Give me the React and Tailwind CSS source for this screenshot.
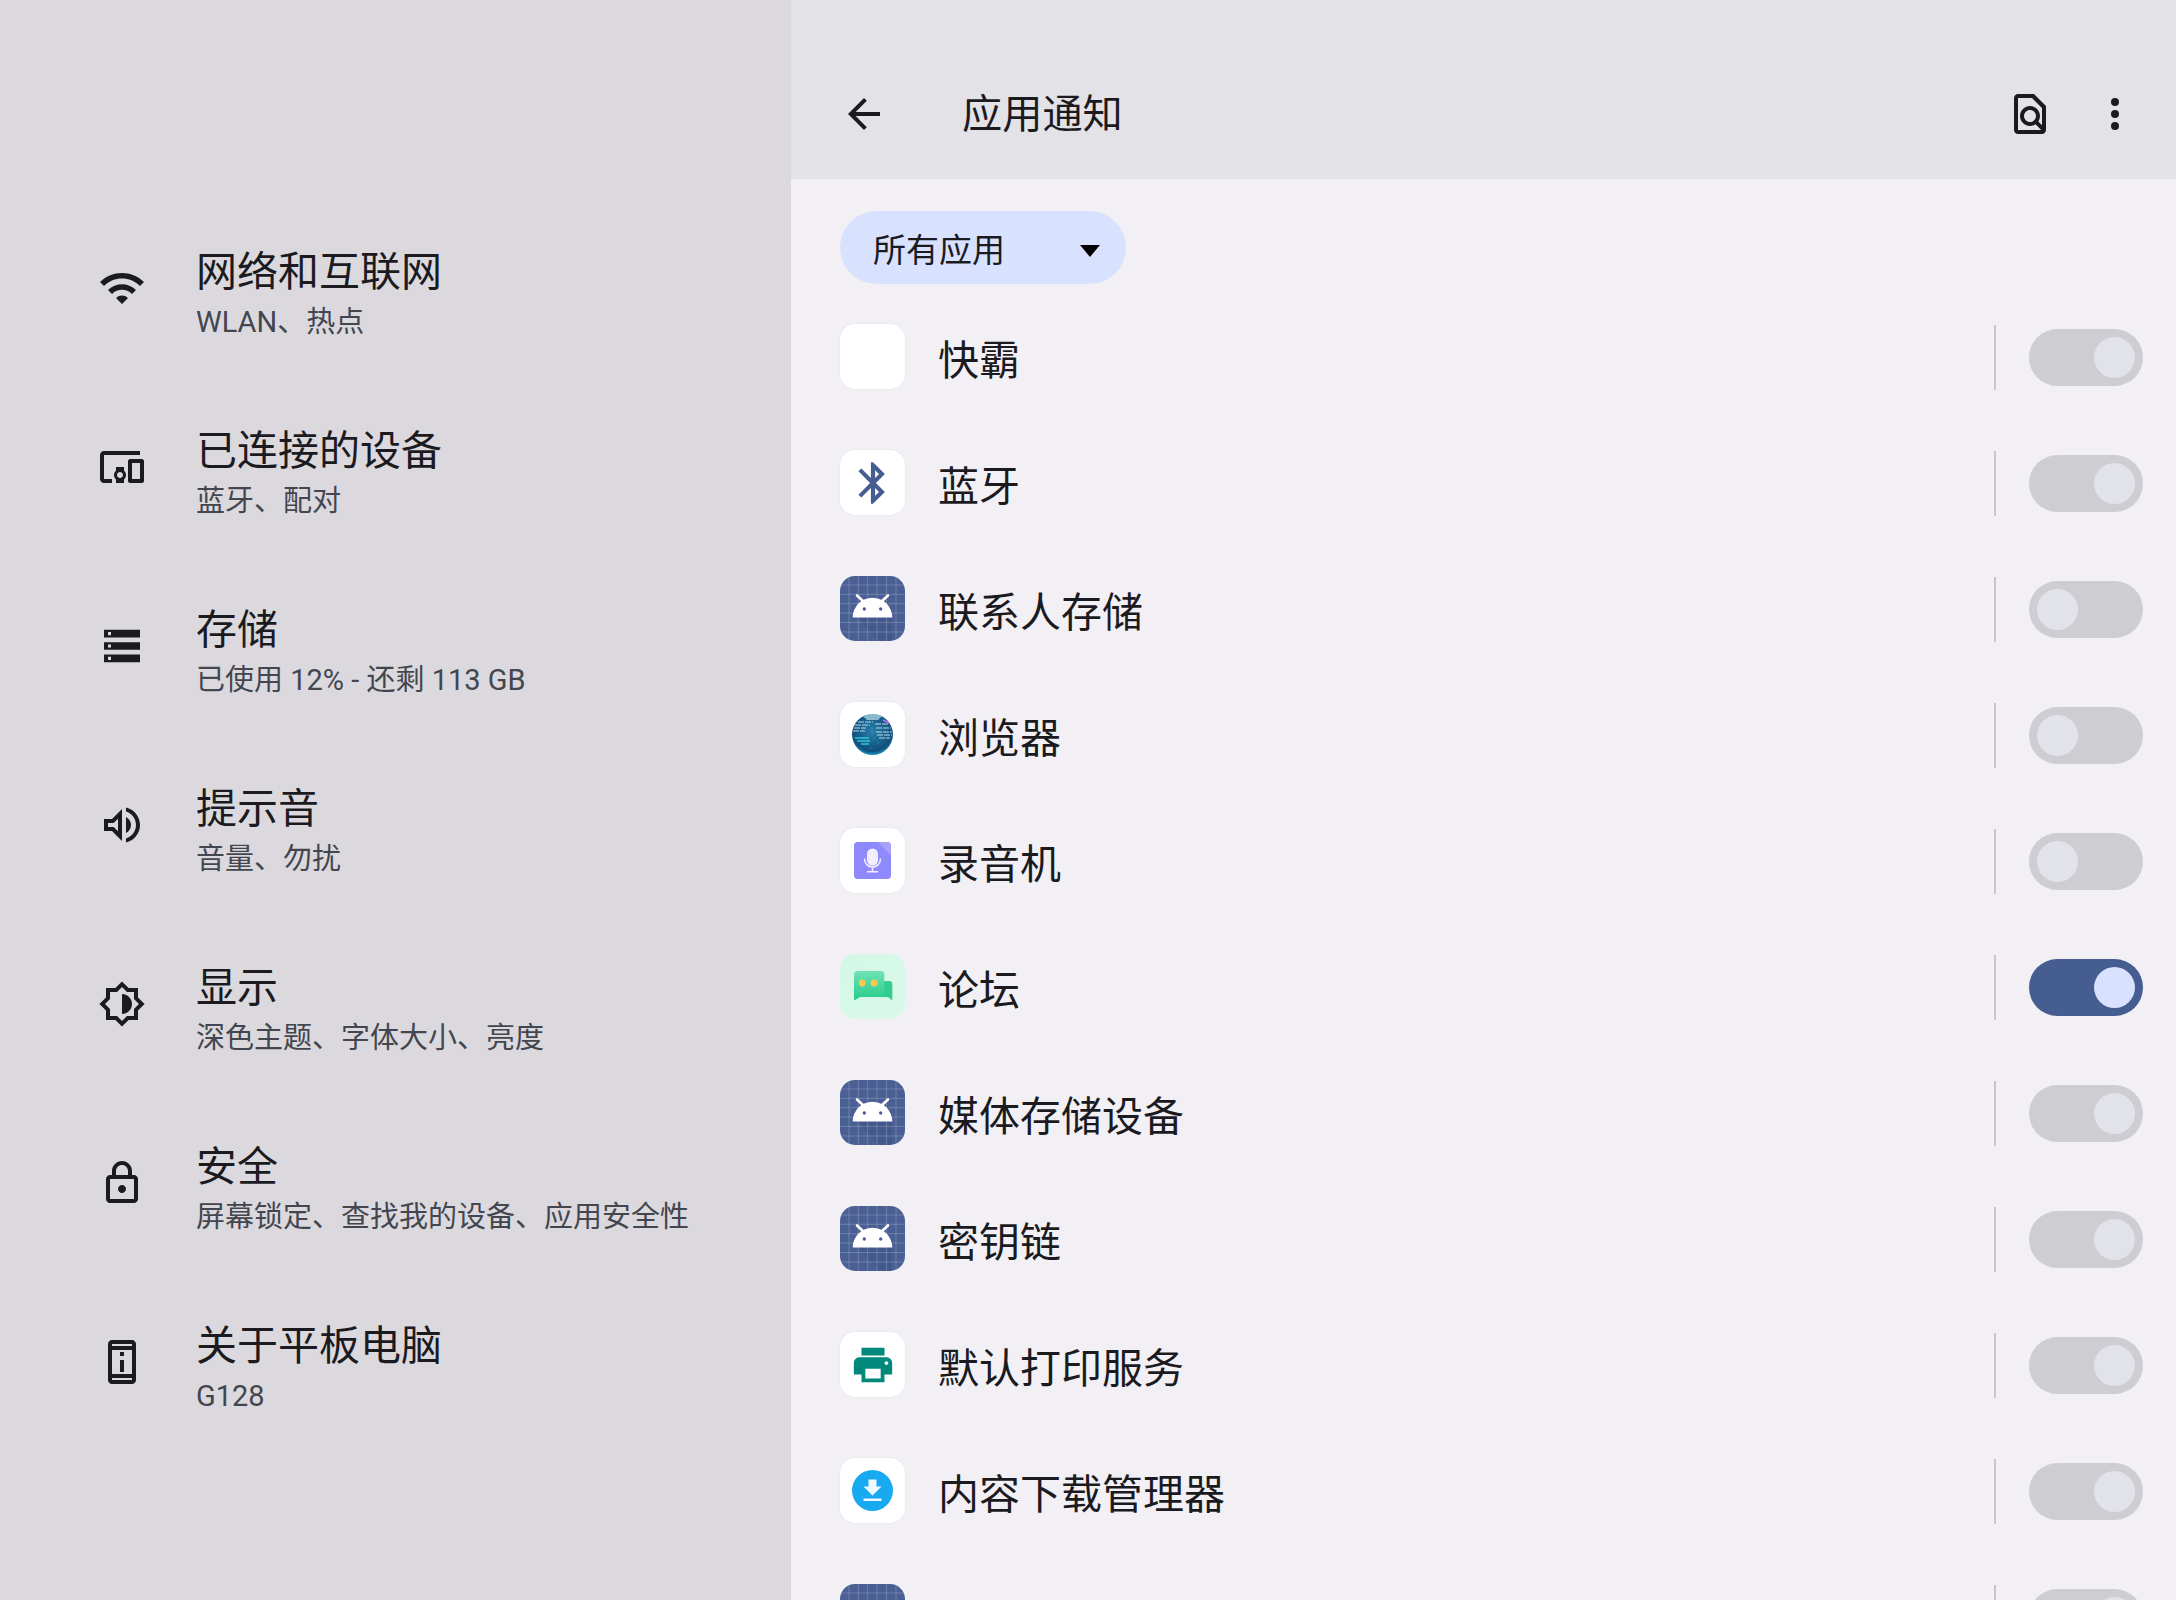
import React from 'react';

const settingsItems = [
  {
    title: '网络和互联网',
    sub: 'WLAN、热点',
    d: 'M1 9l2 2c4.97-4.97 13.03-4.97 18 0l2-2C16.93 2.93 7.08 2.93 1 9zm8 8l3 3 3-3c-1.65-1.66-4.34-1.66-6 0zm-4-4l2 2c2.76-2.76 7.24-2.76 10 0l2-2C15.14 9.14 8.87 9.14 5 13z',
  },
  {
    title: '已连接的设备',
    sub: '蓝牙、配对',
    d: 'M3,6h18V4H3C1.9,4,1,4.9,1,6v12c0,1.1,0.9,2,2,2h4v-2H3V6z M13,12H9v1.78C8.39,14.33,8,15.11,8,16c0,0.89,0.39,1.67,1,2.22V20h4v-1.78c0.61-0.55,1-1.34,1-2.22s-0.39-1.67-1-2.22V12z M11,17.5c-0.83,0-1.5-0.67-1.5-1.5s0.67-1.5,1.5-1.5s1.5,0.67,1.5,1.5S11.83,17.5,11,17.5z M22,8h-6c-0.5,0-1,0.5-1,1v10c0,0.5,0.5,1,1,1h6c0.5,0,1-0.5,1-1V9C23,8.5,22.5,8,22,8z M21,18h-4v-8h4V18z',
  },
  {
    title: '存储',
    sub: '已使用 12% - 还剩 113 GB',
    d: 'M3 3.9h18v3.8H3zM5 5v1.6h1.5V5zM3 10.1h18v3.8H3zM5 11.2v1.6h1.5v-1.6zM3 16.3h18v3.8H3zM5 17.4V19h1.5v-1.6z',
    evenodd: true,
  },
  {
    title: '提示音',
    sub: '音量、勿扰',
    d: 'M3 9v6h4l5 5V4L7 9H3zm7-.17v6.34L7.83 13H5v-2h2.83L10 8.83zM16.5 12c0-1.77-1.02-3.29-2.5-4.03v8.05c1.48-.73 2.5-2.25 2.5-4.02zM14 3.23v2.06c2.89.86 5 3.54 5 6.71s-2.11 5.85-5 6.71v2.06c4.01-.91 7-4.49 7-8.77 0-4.28-2.99-7.86-7-8.77z',
  },
  {
    title: '显示',
    sub: '深色主题、字体大小、亮度',
    d: 'M20 15.31L23.31 12 20 8.69V4h-4.69L12 .69 8.69 4H4v4.69L.69 12 4 15.31V20h4.69L12 23.31 15.31 20H20v-4.69zM18 14.48V18h-3.52L12 20.48 9.52 18H6v-3.52L3.52 12 6 9.52V6h3.52L12 3.52 14.48 6H18v3.52L20.48 12 18 14.48zM12 7v10c2.76 0 5-2.24 5-5s-2.24-5-5-5z',
  },
  {
    title: '安全',
    sub: '屏幕锁定、查找我的设备、应用安全性',
    d: 'M18 8h-1V6c0-2.76-2.24-5-5-5S7 3.24 7 6v2H6c-1.1 0-2 .9-2 2v10c0 1.1.9 2 2 2h12c1.1 0 2-.9 2-2V10c0-1.1-.9-2-2-2zM9 6c0-1.66 1.34-3 3-3s3 1.34 3 3v2H9V6zm9 14H6V10h12v10zm-6-3c1.1 0 2-.9 2-2s-.9-2-2-2-2 .9-2 2 .9 2 2 2z',
  },
  {
    title: '关于平板电脑',
    sub: 'G128',
    d: 'M17 1H7c-1.1 0-2 .9-2 2v18c0 1.1.9 2 2 2h10c1.1 0 2-.9 2-2V3c0-1.1-.9-2-2-2zm0 20H7v-1h10v1zm0-3H7V6h10v12zm0-14H7V3h10v1zM11 7h2v2h-2zM11 11h2v6h-2z',
  },
];

const SvgIcon = ({ d, evenodd, className = '' }) => (
  <svg viewBox="0 0 24 24" className={className} fill="currentColor">
    <path d={d} fillRule={evenodd ? 'evenodd' : 'nonzero'} clipRule={evenodd ? 'evenodd' : 'nonzero'} />
  </svg>
);

const AndroidTile = () => (
  <svg viewBox="0 0 65 65" className="h-[65px] w-[65px] rounded-[15px]">
    <rect width="65" height="65" fill="#4a5f94" />
    <path d="M17 42 L52 42 L52 65 L40 65 Z" fill="#3f5386" opacity="0.6" />
    <g stroke="#ffffff" strokeOpacity="0.2" strokeWidth="1">
      {[9, 18.3, 27.7, 37, 46.5, 56].map((p) => (
        <React.Fragment key={p}>
          <line x1={p} y1="0" x2={p} y2="65" />
          <line x1="0" y1={p} x2="65" y2={p} />
        </React.Fragment>
      ))}
    </g>
    <path d="M12.7 41.5a19.8 19.8 0 0 1 39.6 0z" fill="#ffffff" />
    <path d="M17 19.5 L23.5 25.5 M48 19.5 L41.5 25.5" stroke="#ffffff" strokeWidth="2.6" strokeLinecap="round" />
    <circle cx="24.3" cy="33" r="1.7" fill="#4a5f94" />
    <circle cx="40.7" cy="33" r="1.7" fill="#4a5f94" />
  </svg>
);

const BluetoothTile = () => (
  <div className="flex h-[65px] w-[65px] items-center justify-center rounded-[15px] bg-white shadow-[0_0_2px_rgba(0,0,0,0.08)]">
    <SvgIcon
      className="h-[50px] w-[50px] text-[#465d91]"
      d="M17.71 7.71L12 2h-1v7.59L6.41 5 5 6.41 10.59 12 5 17.59 6.41 19 11 14.41V22h1l5.71-5.71-4.3-4.29 4.3-4.29zM13 5.83l1.88 1.88L13 9.59V5.83zm1.88 10.46L13 18.17v-3.76l1.88 1.88z"
    />
  </div>
);

const GlobeTile = () => (
  <div className="flex h-[65px] w-[65px] items-center justify-center rounded-[15px] bg-white shadow-[0_0_2px_rgba(0,0,0,0.08)]">
    <svg viewBox="0 0 41 41" className="h-[41px] w-[41px]">
      <defs>
        <radialGradient id="globe" cx="50%" cy="42%" r="60%">
          <stop offset="0%" stopColor="#2a7fa8" />
          <stop offset="55%" stopColor="#175f8c" />
          <stop offset="82%" stopColor="#124f7c" />
          <stop offset="100%" stopColor="#1fa6d0" />
        </radialGradient>
      </defs>
      <circle cx="20.5" cy="20.5" r="20.5" fill="url(#globe)" />
      <path d="M11 2.3a20.5 20.5 0 0 1 19 0 L26 6 H15z" fill="#a8cfe0" opacity="0.8" />
      <g stroke="#d3eef6" strokeWidth="1" strokeDasharray="6 1" opacity="0.85">
        <line x1="6" y1="8" x2="21" y2="8" />
        <line x1="3" y1="11" x2="18" y2="11" />
        <line x1="2" y1="14" x2="14" y2="14" />
        <line x1="1" y1="17" x2="13" y2="17" />
        <line x1="23" y1="10" x2="36" y2="10" />
        <line x1="24" y1="14" x2="39" y2="14" />
        <line x1="24" y1="18" x2="40" y2="18" />
        <line x1="25" y1="21" x2="40" y2="21" />
        <line x1="27" y1="24" x2="38" y2="24" />
      </g>
      <g stroke="#35e0e4" strokeWidth="1.2">
        <line x1="3" y1="24" x2="17" y2="24" />
        <line x1="5" y1="27" x2="18" y2="27" />
        <line x1="9" y1="30" x2="17" y2="30" />
      </g>
      <line x1="31" y1="6" x2="37" y2="9" stroke="#c86bf0" strokeWidth="1.4" />
      <g fill="#5cc0da" opacity="0.8">
        <circle cx="20" cy="14" r="0.6" />
        <circle cx="20" cy="18" r="0.6" />
        <circle cx="22" cy="24" r="0.6" />
        <circle cx="26" cy="29" r="0.6" />
        <circle cx="19" cy="34" r="0.6" />
      </g>
    </svg>
  </div>
);

const RecorderTile = () => (
  <div className="flex h-[65px] w-[65px] items-center justify-center rounded-[15px] bg-white shadow-[0_0_2px_rgba(0,0,0,0.08)]">
    <svg viewBox="0 0 37 37" className="h-[37px] w-[37px] rounded-[4px]">
      <rect width="37" height="37" fill="#7d78ff" />
      <path d="M0 0H24L37 14V0z" fill="#a7a1fb" />
      <path d="M0 0H24L37 14V37H0z" fill="#a49dfb" opacity="0.45" />
      <rect x="13" y="6.5" width="11" height="17" rx="5.5" fill="#f1effe" />
      <path d="M10.5 16.5c0 5 3.5 8.5 8 8.5s8-3.5 8-8.5" fill="none" stroke="#f1effe" strokeWidth="1.6" />
      <path d="M18.5 25v4.5M13 29.8h11" stroke="#f1effe" strokeWidth="1.6" />
    </svg>
  </div>
);

const ForumTile = () => (
  <svg viewBox="0 0 65 65" className="h-[65px] w-[65px] rounded-[15px]">
    <defs>
      <linearGradient id="forumBg" x1="0" y1="0" x2="1" y2="1">
        <stop offset="0%" stopColor="#d3f7e6" />
        <stop offset="100%" stopColor="#d9f9ea" />
      </linearGradient>
      <linearGradient id="bubble" x1="0" y1="0" x2="0" y2="1">
        <stop offset="0%" stopColor="#6ee3b5" />
        <stop offset="100%" stopColor="#26cb8a" />
      </linearGradient>
      <filter id="soft">
        <feGaussianBlur stdDeviation="0.6" />
      </filter>
    </defs>
    <rect width="65" height="65" fill="url(#forumBg)" />
    <g filter="url(#soft)">
      <path d="M34 27H49a3.3 3.3 0 0 1 3.3 3.3V46.5L48 43H34z" fill="#35cc92" />
      <path d="M16.5 17H41a3.3 3.3 0 0 1 3.3 3.3V43H20L14 46.5V20.3A3.3 3.3 0 0 1 16.5 17z" fill="url(#bubble)" />
    </g>
    <circle cx="22.3" cy="29" r="3.4" fill="#ffc94d" />
    <circle cx="34" cy="29" r="3.4" fill="#ffc94d" />
  </svg>
);

const PrintTile = () => (
  <div className="flex h-[65px] w-[65px] items-center justify-center rounded-[15px] bg-white shadow-[0_0_2px_rgba(0,0,0,0.08)]">
    <SvgIcon
      className="h-[46px] w-[46px] text-[#00897b]"
      d="M19 8H5c-1.66 0-3 1.34-3 3v6h4v4h12v-4h4v-6c0-1.66-1.34-3-3-3zm-3 11H8v-5h8v5zm3-7c-.55 0-1-.45-1-1s.45-1 1-1 1 .45 1 1-.45 1-1 1zm-1-9H6v4h12V3z"
    />
  </div>
);

const DownloadTile = () => (
  <div className="flex h-[65px] w-[65px] items-center justify-center rounded-[15px] bg-white shadow-[0_0_2px_rgba(0,0,0,0.08)]">
    <svg viewBox="0 0 41 41" className="h-[41px] w-[41px]">
      <circle cx="20.5" cy="20.5" r="20.5" fill="#18aaf0" />
      <path d="M16.5 9.5h8v7h5l-9 9-9-9h5z" fill="#eef8fe" />
      <rect x="11.5" y="28.5" width="18" height="2.5" fill="#eef8fe" />
    </svg>
  </div>
);

const EmptyTile = () => (
  <div className="h-[65px] w-[65px] rounded-[15px] bg-white shadow-[0_0_2px_rgba(0,0,0,0.08)]" />
);

const apps = [
  { name: '快霸', tile: <EmptyTile />, on: true, disabled: true },
  { name: '蓝牙', tile: <BluetoothTile />, on: true, disabled: true },
  { name: '联系人存储', tile: <AndroidTile />, on: false, disabled: true },
  { name: '浏览器', tile: <GlobeTile />, on: false, disabled: true },
  { name: '录音机', tile: <RecorderTile />, on: false, disabled: true },
  { name: '论坛', tile: <ForumTile />, on: true, disabled: false },
  { name: '媒体存储设备', tile: <AndroidTile />, on: true, disabled: true },
  { name: '密钥链', tile: <AndroidTile />, on: true, disabled: true },
  { name: '默认打印服务', tile: <PrintTile />, on: true, disabled: true },
  { name: '内容下载管理器', tile: <DownloadTile />, on: true, disabled: true },
  { name: '', tile: <AndroidTile />, on: true, disabled: true },
];

const Toggle = ({ on, disabled }) => (
  <div
    className={`flex h-[57px] w-[114px] items-center rounded-full px-[8px] ${on ? 'justify-end' : 'justify-start'} ${
      disabled ? 'bg-[#cecdd2]' : 'bg-[#465d91]'
    }`}
  >
    <div className={`h-[41px] w-[41px] rounded-full ${disabled ? 'bg-[#e2e2ea]' : 'bg-[#d8e2ff]'}`} />
  </div>
);

const App = () => {
  return (
    <div className="flex h-[1600px] w-[2176px] overflow-hidden font-[Roboto,'Noto_Sans_CJK_SC',sans-serif] text-[#1b1b1f]">
      {/* settings list */}
      <div className="w-[791px] shrink-0 bg-[#dbd9de] pt-[198.5px]">
        {settingsItems.map((item) => (
          <div key={item.title} className="flex h-[179px] items-center pl-[98px]">
            <SvgIcon d={item.d} evenodd={item.evenodd} className="h-[48px] w-[48px] shrink-0 text-[#1b1b1f]" />
            <div className="ml-[50px] pt-[13px]">
              <div className="text-[41px] leading-[55px]">{item.title}</div>
              <div className="text-[29px] leading-[44px] text-[#44464f]">{item.sub}</div>
            </div>
          </div>
        ))}
      </div>

      {/* app notifications */}
      <div className="flex min-w-0 flex-1 flex-col bg-[#f2f0f5]">
        <div className="flex h-[179px] shrink-0 items-center bg-[#e3e2e7] pl-[49px] pr-[37px] pt-[49px]">
          <SvgIcon className="h-[48px] w-[48px]" d="M20 11H7.83l5.59-5.59L12 4l-8 8 8 8 1.41-1.41L7.83 13H20v-2z" />
          <div className="ml-[74px] flex-1 pt-[2px] text-[40.2px]">应用通知</div>
          <SvgIcon
            className="h-[48px] w-[48px]"
            d="M6 4h7l5 5v8.58l-1.84-1.84c1.28-1.94 1.07-4.57-.64-6.28C14.55 8.49 13.28 8 12 8c-1.28 0-2.55.49-3.53 1.46-1.95 1.95-1.95 5.11 0 7.05.97.97 2.25 1.46 3.53 1.46.96 0 1.92-.28 2.75-.83L17.6 20H6V4zm8.11 11.1c-.56.56-1.31.88-2.11.88s-1.55-.31-2.11-.88c-.56-.56-.88-1.31-.88-2.11s.31-1.55.88-2.11c.56-.57 1.31-.88 2.11-.88s1.55.31 2.11.88c.56.56.88 1.31.88 2.11s-.31 1.55-.88 2.11zM14 2H6c-1.1 0-2 .9-2 2v16c0 1.1.9 2 2 2h12c1.1 0 2-.9 2-2V8l-6-6z"
          />
          <svg viewBox="0 0 24 24" className="ml-[37px] h-[48px] w-[48px]" fill="currentColor">
            <circle cx="12" cy="6" r="2" />
            <circle cx="12" cy="12" r="2" />
            <circle cx="12" cy="18" r="2" />
          </svg>
        </div>

        <div className="pl-[49px] pr-[33px] pt-[32px]">
          <div className="flex h-[73px] w-[286px] items-center justify-between rounded-full bg-[#d8e2ff] pl-[33px] pr-[26px]">
            <span className="pt-[6px] text-[33px] leading-none">所有应用</span>
            <svg viewBox="0 0 20 12" className="mt-[6px] h-[12px] w-[20px]" fill="#000000">
              <path d="M0 0h20L10 12z" />
            </svg>
          </div>

          <div className="mt-[9.5px]">
            {apps.map((app, i) => (
              <div key={i} className="flex h-[126px] items-center">
                {app.tile}
                <div className="ml-[33px] flex-1 pt-[11px] text-[41px]">{app.name}</div>
                <div className="mt-[2px] h-[65px] w-[2px] bg-[#c8c6cc]" />
                <div className="ml-[33px] mt-[2px]">
                  <Toggle on={app.on} disabled={app.disabled} />
                </div>
              </div>
            ))}
          </div>
        </div>
      </div>
    </div>
  );
};

export default App;
